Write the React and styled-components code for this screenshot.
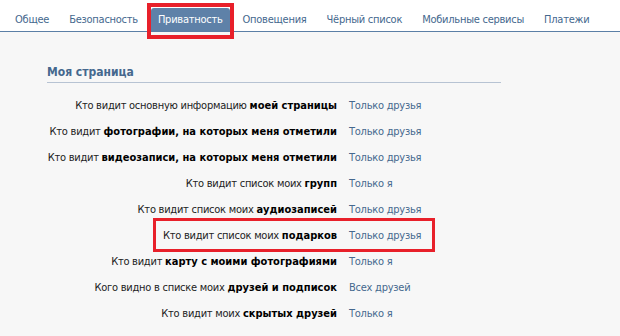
import styled, { createGlobalStyle } from 'styled-components';

const GlobalStyle = createGlobalStyle`
  body {
    margin: 0;
    background: #f7f7f7;
    font-family: "DejaVu Sans Condensed", "DejaVu Sans", sans-serif;
    font-size: 11px;
    letter-spacing: -0.25px;
    color: #000;
  }
`

const Page = styled.div`
  width: 620px;
  height: 336px;
  overflow: hidden;
  background: #f7f7f7;
`

const TabBar = styled.div`
  display: flex;
  align-items: flex-end;
  gap: 6px;
  height: 31px;
  padding-left: 8px;
  background: #fff;
  border-bottom: 1px solid #5b7fa6;
`

const Tab = styled.div`
  position: relative;
  height: 23px;
  line-height: 23px;
  padding: 0 7px;
  color: ${p => (p.$active ? '#fff' : '#45688e')};
  background: ${p => (p.$active ? '#5e81a8' : 'transparent')};
  border-radius: 3px 3px 0 0;
  white-space: nowrap;

  ${p => p.$marked && `
    &::after {
      content: '';
      position: absolute;
      left: -4px;
      right: -4px;
      top: -5px;
      bottom: -8px;
      border: 4px solid #e8202a;
      pointer-events: none;
    }
  `}
`

const Section = styled.div`
  margin: 0 0 0 47px;
  width: 454px;
  padding-top: 32px;
`

const Heading = styled.h2`
  margin: 0 0 9px;
  padding-bottom: 2px;
  border-bottom: 1px solid #b7c3d3;
  color: #45688e;
  font-size: 12px;
  font-weight: bold;
  letter-spacing: 0;
  line-height: 16px;
`

const Row = styled.div`
  position: relative;
  display: grid;
  grid-template-columns: 290px 1fr;
  column-gap: 12px;
  height: 26px;
  align-items: center;

  ${p => p.$marked && `
    &::after {
      content: '';
      position: absolute;
      left: 106px;
      width: 282px;
      top: -4px;
      height: 34px;
      box-sizing: border-box;
      border: 3px solid #e8202a;
      pointer-events: none;
    }
  `}
`

const Label = styled.div`
  text-align: right;
  white-space: nowrap;
  color: #222;

  b {
    color: #000;
    letter-spacing: 0;
  }
`

const Value = styled.div`
  color: #45688e;
  white-space: nowrap;
`

const tabs = ['Общее', 'Безопасность', 'Приватность', 'Оповещения', 'Чёрный список', 'Мобильные сервисы', 'Платежи']

const rows = [
  { text: 'Кто видит основную информацию ', bold: 'моей страницы', value: 'Только друзья' },
  { text: 'Кто видит ', bold: 'фотографии, на которых меня отметили', value: 'Только друзья' },
  { text: 'Кто видит ', bold: 'видеозаписи, на которых меня отметили', value: 'Только друзья' },
  { text: 'Кто видит список моих ', bold: 'групп', value: 'Только я' },
  { text: 'Кто видит список моих ', bold: 'аудиозаписей', value: 'Только друзья' },
  { text: 'Кто видит список моих ', bold: 'подарков', value: 'Только друзья', marked: true },
  { text: 'Кто видит ', bold: 'карту с моими фотографиями', value: 'Только я' },
  { text: 'Кого видно в списке моих ', bold: 'друзей и подписок', value: 'Всех друзей' },
  { text: 'Кто видит моих ', bold: 'скрытых друзей', value: 'Только я' }
]

export default function App () {
  return (
    <Page>
      <GlobalStyle />
      <TabBar>
        {tabs.map(name => (
          <Tab key={name} $active={name === 'Приватность'} $marked={name === 'Приватность'}>
            {name}
          </Tab>
        ))}
      </TabBar>
      <Section>
        <Heading>Моя страница</Heading>
        {rows.map(({ text, bold, value, marked }) => (
          <Row key={bold} $marked={marked}>
            <Label>{text}<b>{bold}</b></Label>
            <Value>{value}</Value>
          </Row>
        ))}
      </Section>
    </Page>
  )
}
